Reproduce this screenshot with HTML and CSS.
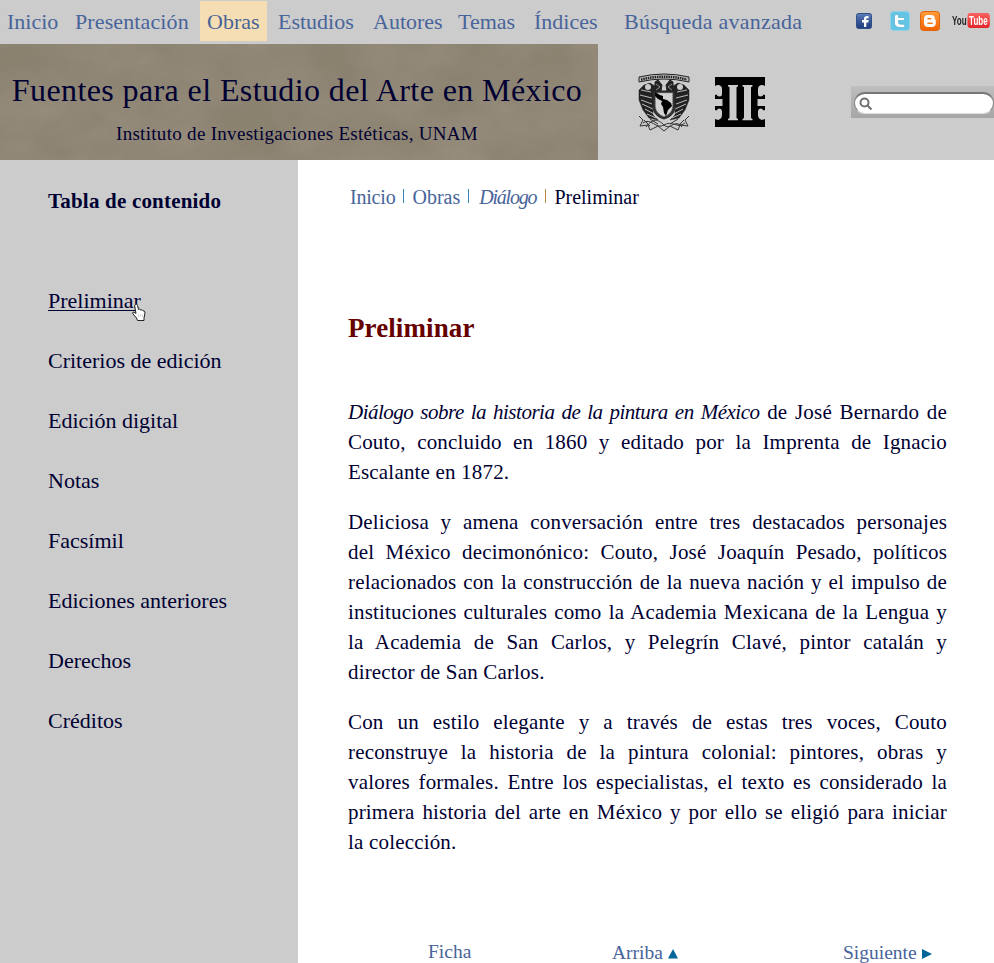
FILE: index.html
```
<!DOCTYPE html>
<html lang="es">
<head>
<meta charset="utf-8">
<title>Fuentes para el Estudio del Arte en México</title>
<link rel="stylesheet" href="styles.css">
</head>
<body>
<nav class="topbar">
  <div class="menu">
    <a>Inicio</a><a>Presentación</a><a class="active"><span>Obras</span></a><a>Estudios</a><a>Autores</a><a>Temas</a><a>Índices</a><a class="wide">Búsqueda avanzada</a>
  </div>
  <div class="social">
    <svg class="fb" width="16" height="16" viewBox="0 0 16 16"><defs><linearGradient id="f" x2="0" y2="1"><stop stop-color="#6080b8"/><stop offset=".5" stop-color="#385898"/><stop offset="1" stop-color="#203c7c"/></linearGradient></defs><rect x=".5" y=".5" width="15" height="15" rx="2" fill="url(#f)" stroke="#304f89"/><path d="M8 14V9.500H6V7h2V5.500C8 3.500 9.500 2.700 12.500 3v2.200h-1.200c-.8 0-1 .3-1 .9V7h2.400l-.4 2.500h-2V14z" fill="#fff"/></svg>
    <svg class="tw" width="20" height="20" viewBox="0 0 20 20"><rect x=".5" y=".5" width="19" height="19" rx="3" fill="#64c4e4" stroke="#91d2e7"/><path d="M6.500 3.500c1.300 0 2 .8 2 2v1H13c2.300 0 2.300 3 0 3H8.500v2c0 1.300.8 1.700 2 1.700H13c2.500 0 2.500 3.300 0 3.300h-3c-3.500 0-5.500-1.700-5.500-5v-6c0-1.200.8-2 2-2z" fill="#fff" stroke="#43a4cc" stroke-width=".6"/></svg>
    <svg class="bl" width="20" height="20" viewBox="0 0 20 20"><defs><linearGradient id="b" x2="0" y2="1"><stop stop-color="#ff9c3c"/><stop offset="1" stop-color="#f46200"/></linearGradient></defs><rect x=".5" y=".5" width="19" height="19" rx="3" fill="url(#b)" stroke="#df650c"/><path d="M7.500 4h3.700c2.300 0 3.600 1.500 3.600 3.500 0 1.200.2 1.300 1 1.300V12c0 2.500-1.500 4-4 4H8c-2.500 0-4-1.500-4-4V8c0-2.500 1.500-4 3.500-4z" fill="#fff"/><path d="M8 7.700h2.600M8 12.200h4.200" stroke="#f47a1c" stroke-width="1.600" stroke-linecap="round"/></svg>
    <span class="yt"><span>You</span><b>Tube</b></span>
  </div>
</nav>
<header class="header">
  <div class="banner">
    <svg class="paper" width="598" height="116"><defs>
      <filter id="grain" x="0" y="0" width="100%" height="100%"><feTurbulence type="fractalNoise" baseFrequency=".1 .2" numOctaves="4" seed="4"/><feColorMatrix values="0 0 0 0 .25  0 0 0 0 .22  0 0 0 0 .16  .7 .6 0 0 -.45"/></filter>
      <filter id="stain" x="0" y="0" width="100%" height="100%"><feTurbulence type="fractalNoise" baseFrequency=".014 .02" numOctaves="3" seed="9"/><feColorMatrix values="0 0 0 0 .55  0 0 0 0 .45  0 0 0 0 .4  .8 0 0 0 -.2"/></filter></defs>
      <rect width="598" height="116" fill="#8b8270"/><rect width="598" height="116" filter="url(#stain)" opacity=".5"/><rect width="598" height="116" filter="url(#grain)" opacity=".4"/></svg>
    <h1>Fuentes para el Estudio del Arte en México</h1>
    <p>Instituto de Investigaciones Estéticas, UNAM</p>
  </div>
  <svg class="unam" width="54" height="60" viewBox="0 0 54 60" fill="none" stroke="#222">
    <path d="M1 4q25-6 50 0v5q-25-6-50 0z" fill="#bbb"/><path d="M3 6.500q23-5.500 46 0" stroke-width="2.500" stroke-dasharray="1.500 .8"/>
    <path d="M1 17l5-5 6-2 5 3 1 6-3 3v20l5 5-9-2-6-8-4-10zM51 17l-5-5-6-2-5 3-1 6 3 3v20l-5 5 9-2 6-8 4-10z" fill="#222" stroke-width=".5"/>
    <path d="M3 17l10 2M2 22l12 3M3 27l11 4M4 31l11 5M7 36l9 5M9 41l9 4M49 17l-10 2M50 22l-12 3M49 27l-11 4M48 31l-11 5M45 36l-9 5M43 41l-9 4" stroke="#ccc" stroke-width=".9"/>
    <circle cx="10" cy="14" r="3" fill="#ccc" stroke="none"/><circle cx="42" cy="14" r="3" fill="#ccc" stroke="none"/>
    <path d="M17 9l3-2 4 5-1 6-6 1zM35 9l-3-2-4 5 1 6 6 1z" fill="#222"/><path d="M18 11l4 3-4 3M34 11l-4 3 4 3" stroke="#aaa" stroke-width=".8"/>
    <path d="M15 18h22v15q0 10-11 13-11-3-11-13z" fill="#333"/><path d="M17.500 20h17v13q0 7.500-8.500 10.500-8.500-3-8.500-10.500z" fill="#d4d4d4" stroke="#999" stroke-dasharray="1 1"/>
    <path d="M17 19l5 3 3 1v3l4 1 4 3 1 3-4 4-2 6-2-3-1-6-2-3 1-3-4-2-3-3z" fill="#000" stroke="none"/>
    <path d="M1 43l4 4-3 6 8-1 2 5 8-4 6 5 6-5 8 4 2-5 8 1-3-6 4-4M5 50c8-6 13 7 21 2s13 4 21-2M8 54c7-9 12-8 18-2s11-7 18 2M12 46l8 5M40 46l-8 5M6 47l6 6M46 47l-6 6" stroke="#333"/>
  </svg>
  <svg class="iie" width="50" height="50" viewBox="0 0 50 50"><rect width="50" height="50"/><g fill="#ccc"><path d="M13 8h10v1.300l-1.500 1V41l1.500 1v1.300H13V42l1.500-1V10.300L13 9.300zM27.500 8h10v1.300l-1.500 1V41l1.500 1v1.300h-10V42l1.500-1V10.300l-1.500-1zM0 9q2-1.500 4-1 3 1 3 4v5q0 2.500-2.500 2.500T1.500 17.500L0 18zM50 9q-2-1.500-4-1-3 1-3 4v5q0 2.500 2.500 2.500t3-2L50 18zM0 22h7.500v7H0zM50 22h-7.500v7H50zM0 33q1 0 1.500.5 1-2 3-2T7 34v4q0 4-4 5l-3-1zM50 33q-1 0-1.500.5-1-2-3-2T43 34v4q0 4 4 5l3-1z"/></g></svg>
  <div class="search"><div class="field"><svg width="14" height="14" viewBox="0 0 14 14" fill="none" stroke="#707070" stroke-width="2"><circle cx="5.500" cy="5.500" r="4"/><path d="M8.500 8.500l4 4"/></svg></div></div>
</header>
<div class="columns">
  <aside>
    <h2>Tabla de contenido</h2>
    <ul>
      <li class="current"><span>Preliminar</span>
        <svg class="hand" width="16" height="19" viewBox="0 0 16 19"><path d="M4.500 1.500q1.500-1 2 1l1 4q1.500-1 2.300.5 1.700-.7 2.200.8 2-.3 2 2.200l-1 5v2.500H6.500L5.500 15 2 11q-1-2 1-2l2 1.500L3.700 3q-.2-1 .8-1.500z" fill="#fff" stroke="#222"/><path d="M7.500 11v3M9.500 11v3M11.500 11v3" stroke="#bbb" stroke-width=".5"/></svg></li>
      <li>Criterios de edición</li><li>Edición digital</li><li>Notas</li><li>Facsímil</li><li>Ediciones anteriores</li><li>Derechos</li><li>Créditos</li>
    </ul>
  </aside>
  <main>
    <div class="crumbs"><a>Inicio</a><i class="bar"></i><a>Obras</a><i class="bar"></i><a><em>Diálogo</em></a><i class="bar last"></i><span>Preliminar</span></div>
    <h2>Preliminar</h2>
    <p><span><em>Diálogo sobre la historia de la pintura en México</em> de José Bernardo de</span> <span>Couto, concluido en 1860 y editado por la Imprenta de Ignacio</span> <span>Escalante en 1872.</span></p>
    <p><span>Deliciosa y amena conversación entre tres destacados personajes</span> <span>del México decimonónico: Couto, José Joaquín Pesado, políticos</span> <span>relacionados con la construcción de la nueva nación y el impulso de</span> <span>instituciones culturales como la Academia Mexicana de la Lengua y</span> <span>la Academia de San Carlos, y Pelegrín Clavé, pintor catalán y</span> <span>director de San Carlos.</span></p>
    <p><span>Con un estilo elegante y a través de estas tres voces, Couto</span> <span>reconstruye la historia de la pintura colonial: pintores, obras y</span> <span>valores formales. Entre los especialistas, el texto es considerado la</span> <span>primera historia del arte en México y por ello se eligió para iniciar</span> <span>la colección.</span></p>
    <div class="pager"><a>Ficha</a><a>Arriba <svg width="10" height="10"><path d="M0 9.500L5 0l5 9.500z"/></svg></a><a>Siguiente <svg width="10" height="10"><path d="M0 0l10 5-10 5z"/></svg></a></div>
  </main>
</div>
</body>
</html>
```
FILE: styles.css
```
* { box-sizing: border-box; }
body { margin: 0; width: 994px; height: 963px; overflow: hidden; background: #fff; color: #000033; font-family: "Liberation Serif", serif; }
h1, h2, p, ul { margin: 0; padding: 0; }
a { color: #48649a; }
.topbar { display: flex; height: 44px; background: #ccc; }
.menu { display: grid; flex: none; grid-template-columns: 68px 125px 78px 95px 85px 76px 90px 190px; padding: 1px 0 3px 7px; width: 855px; font-size: 22px; line-height: 42px; letter-spacing: 0; white-space: nowrap; }
.menu a:nth-child(2) { letter-spacing: .12px; }
.menu a.wide { letter-spacing: .25px; }
.active { height: 40px; width: 67px; padding-left: 7px; background: #f5deb3; }
.social { display: flex; flex: none; width: 139px; align-items: flex-start; padding-top: 11px; }
.fb { margin: 2px 18px 0 1px; }
.tw { margin-right: 10px; }
.social svg { flex: none; }
.yt { display: flex; flex: none; align-items: center; margin: 2px 0 0 12px; height: 15px; color: #222; font: bold 13px/15px "Liberation Sans", sans-serif; transform: scaleX(.62); transform-origin: left; }
.yt b { margin-left: 1px; padding: 0 3px; border-radius: 4px; background: linear-gradient(#fa6260, #e3262a); color: #fff; }
.header { display: flex; height: 116px; background: #ccc; }
.banner { position: relative; width: 598px; height: 116px; padding-top: 26px; text-align: center; }
.paper { position: absolute; top: 0; left: 0; }
.banner h1 { position: relative; padding-right: 4px; font-size: 32px; line-height: 40px; font-weight: normal; letter-spacing: .4px; white-space: nowrap; }
.banner p { position: relative; margin-top: 12px; padding-right: 4px; font-size: 19px; line-height: 24px; letter-spacing: .3px; }
.unam { margin: 29px 0 0 40px; }
.iie { margin: 33px 0 0 23px; }
.search { width: 143px; height: 32px; margin: 42px 0 0 86px; padding: 6px 0 4px 3px; background: linear-gradient(#bebebe, #a6a6a6); }
.field { width: 140px; height: 22px; padding: 3px 4px; border: 1px solid #888; border-top: 2px solid #777; border-bottom-color: #ddd; border-radius: 11px; background: #fff; }
.field svg { display: block; }
.columns { display: flex; height: 803px; }
aside { width: 298px; padding: 26px 0 0 48px; background: #ccc; }
aside h2 { height: 100px; font-size: 21px; line-height: 30px; letter-spacing: .2px; }
aside ul { list-style: none; font-size: 22px; line-height: 30px; }
aside li { height: 60px; }
.current { position: relative; }
.current span { display: inline-block; height: 25px; border-bottom: 1px solid #000033; }
.hand { position: absolute; left: 83px; top: 17px; }
main { width: 599px; margin-left: 50px; padding-top: 22px; }
.crumbs { display: flex; padding-left: 2px; font-size: 20px; line-height: 30px; }
.crumbs em { letter-spacing: -1.2px; margin: 0 1px 0 2px; }
.crumbs a:first-child { letter-spacing: -.2px; }
.bar { width: 1px; height: 14px; margin: 7px 8px 0; background: #3985b8; }
.bar.last { background: #b88745; }
main h2 { margin: 96px 0 49px; color: #600; font-size: 27px; line-height: 40px; letter-spacing: .1px; }
main p { margin-bottom: 20px; font-size: 21px; line-height: 30px; letter-spacing: .18px; white-space: nowrap; }
main p span { display: block; text-align: justify; text-align-last: justify; }
main p span:last-child { text-align-last: left; }
main p em { letter-spacing: -.5px; }
.pager { display: grid; grid-template-columns: 184px 231px 100px; padding: 60px 0 0 80px; font-size: 19.500px; line-height: 30px; white-space: nowrap; }
.pager a + a { padding-top: 1px; }
.pager svg { fill: #006699; }
```
